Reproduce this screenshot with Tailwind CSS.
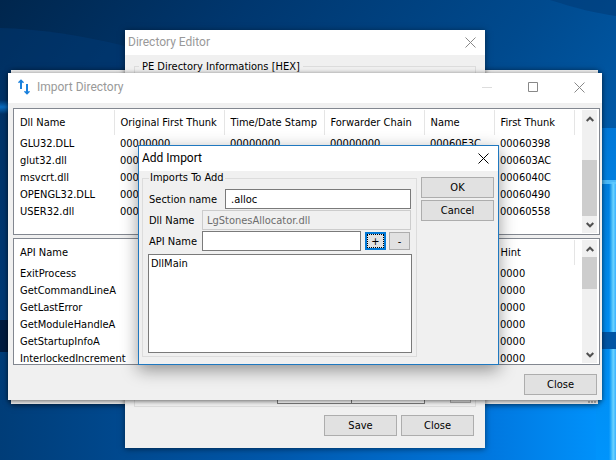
<!DOCTYPE html>
<html lang="en">
<head>
    <meta charset="UTF-8">
    <meta name="viewport" content="width=device-width, initial-scale=1.0">
    <title>Import Directory</title>
    <script src="https://cdn.jsdelivr.net/npm/@tailwindcss/browser@4"></script>
</head>
<body class="relative min-h-screen overflow-hidden bg-[#003a75] font-['DejaVu_Sans_Condensed','DejaVu_Sans',sans-serif] text-[11px] leading-[17px] text-black">
    <!-- Wallpaper -->
    <svg class="absolute inset-0 h-full w-full" viewBox="0 0 616 460" preserveAspectRatio="none" aria-hidden="true">
        <defs>
            <linearGradient id="base" x1="0" y1="0" x2="1" y2="0.6">
                <stop offset="0" stop-color="#00264d"/>
                <stop offset="0.3" stop-color="#00376f"/>
                <stop offset="0.65" stop-color="#004a8e"/>
                <stop offset="1" stop-color="#0064b8"/>
            </linearGradient>
            <linearGradient id="floor" x1="0" y1="0" x2="1" y2="0">
                <stop offset="0" stop-color="#003d78"/>
                <stop offset="0.45" stop-color="#0058ac"/>
                <stop offset="0.8" stop-color="#0078e0"/>
                <stop offset="1" stop-color="#0096ff"/>
            </linearGradient>
            <linearGradient id="side" x1="0" y1="0" x2="0" y2="1">
                <stop offset="0" stop-color="#0078d8"/>
                <stop offset="0.4" stop-color="#0088e8"/>
                <stop offset="1" stop-color="#0094fc"/>
            </linearGradient>
            <linearGradient id="glow" x1="0" y1="0" x2="1" y2="0">
                <stop offset="0" stop-color="#58c8ff" stop-opacity="0"/>
                <stop offset="0.6" stop-color="#6cd4ff"/>
                <stop offset="1" stop-color="#38b0ff"/>
            </linearGradient>
            <linearGradient id="streak" x1="0" y1="0" x2="0" y2="1">
                <stop offset="0" stop-color="#0a6cc0" stop-opacity="0"/>
                <stop offset="0.5" stop-color="#0a6cc0"/>
                <stop offset="1" stop-color="#0a6cc0" stop-opacity="0"/>
            </linearGradient>
        </defs>
        <rect width="616" height="460" fill="url(#base)"/>
        <path d="M0 28C40 29 80 35 125 46V400H0z" fill="#004080" opacity="0.35"/>
        <path d="M550 0C575 8 595 13 616 16V0z" fill="#003c78" opacity="0.6"/>
        <rect y="350" width="616" height="110" fill="url(#floor)"/>
        <rect x="596" y="128" width="20" height="332" fill="url(#side)"/>
        <rect y="100" width="10" height="14" fill="url(#streak)"/>
        <rect y="320" width="10" height="32" fill="#001c40"/>
        <rect x="602" y="332" width="14" height="17" fill="#0055a4"/>
        <path d="M609 182H616V332H609zM609 349H616V460H609z" fill="url(#glow)"/>
        <rect x="602" y="180" width="14" height="4" fill="#5cc8ff" opacity="0.8"/>
    </svg>

    <!-- Parent window -->
    <div class="absolute top-[70px] right-[18px] left-[11px] flex h-[334px] items-end justify-end bg-[#f0f0f0] pr-[2px] pb-px shadow-[0_1px_6px_rgba(0,0,0,0.6)]">
        <svg class="size-[8px]" viewBox="0 0 8 8" fill="#b0b0b0" aria-hidden="true"><path d="M0 6h2v2H0zM3 6h2v2H3zM6 6h2v2H6zM3 3h2v2H3zM6 3h2v2H6zM6 0h2v2H6z"/></svg>
    </div>

    <!-- Directory Editor -->
    <section class="absolute top-[30px] right-[131px] left-[125px] bg-[#f0f0f0] shadow-[0_1px_6px_rgba(0,0,0,0.5)]">
        <header class="flex h-[25px] items-center justify-between bg-white pr-[9px] pl-[3px] font-[Roboto,sans-serif] text-[12px] text-[#999]">
            <h2>Directory Editor</h2>
            <button type="button" aria-label="Close Directory Editor">
                <svg class="size-[11px]" viewBox="0 0 11 11" stroke="#888" fill="none"><path d="M.5.5l10 10M10.5.5l-10 10"/></svg>
            </button>
        </header>
        <div class="px-[9px] pt-[3px] pb-3">
            <fieldset class="h-[349px] border border-[#dcdcdc] px-1">
                <legend class="px-[3px]">PE Directory Informations [HEX]</legend>
                <div class="mt-[309px] flex items-end pl-[138px]">
                    <input type="text" aria-label="RVA" class="h-5 w-[75px] border border-[#7a7a7a] bg-white">
                    <input type="text" aria-label="Size" class="-ml-px h-5 w-[74px] border border-[#7a7a7a] bg-white">
                    <button type="button" aria-label="Browse" class="mb-[1px] ml-[25px] h-[18px] w-[21px] border border-[#adadad] bg-[#e1e1e1]"></button>
                </div>
            </fieldset>
            <div class="mt-2 flex justify-end gap-1 pr-[2px]">
                <button type="button" class="h-[21px] w-[73px] border border-[#adadad] bg-[#e1e1e1]">Save</button>
                <button type="button" class="h-[21px] w-[73px] border border-[#adadad] bg-[#e1e1e1]">Close</button>
            </div>
        </div>
    </section>

    <!-- Import Directory -->
    <section class="absolute top-[73px] right-[14px] left-2 bg-[#f0f0f0] shadow-[0_1px_5px_rgba(0,0,0,0.6)]">
        <header class="flex h-[30px] items-center bg-white pr-[17px] pb-[2px] pl-[10px] font-[Roboto,sans-serif] text-[12px] text-[#999]">
            <svg class="h-4 w-3" viewBox="0 0 12 16" fill="none" stroke="#1a80dc" aria-hidden="true">
                <path d="M3 10V1.500M9 5v9.500" stroke-width="2"/>
                <path d="M.5 3.700L3 1.200L5.500 3.700M6.500 12.300L9 14.800L11.500 12.300" stroke-width="1.500"/>
            </svg>
            <h2 class="ml-[7px] flex-1">Import Directory</h2>
            <div class="flex items-center gap-9">
                <button type="button" aria-label="Minimize" disabled><svg class="size-[10px]" viewBox="0 0 10 10" stroke="#ddd"><path d="M0 5.500h10"/></svg></button>
                <button type="button" aria-label="Maximize"><svg class="size-[10px]" viewBox="0 0 10 10" stroke="#888" fill="none"><path d="M.5.500h9v9h-9z"/></svg></button>
                <button type="button" aria-label="Close Import Directory"><svg class="size-[11px]" viewBox="0 0 11 11" stroke="#888" fill="none"><path d="M.5.5l10 10M10.500.5l-10 10"/></svg></button>
            </div>
        </header>

        <div class="flex flex-col gap-[3px] pt-[5px] pr-[2px] pb-[5px] pl-[5px]">
            <div class="flex h-[127px] overflow-hidden border border-[#828790] bg-white">
                <div class="flex-1 overflow-hidden pt-px">
                    <table class="w-[560px] table-fixed border-collapse text-left whitespace-nowrap">
                        <thead>
                            <tr class="h-[25px]">
                                <th class="w-[100px] border-r border-[#e5e5e5] pb-px pl-[6px] font-normal">Dll Name</th>
                                <th class="w-[110px] border-r border-[#e5e5e5] pb-px pl-[6px] font-normal">Original First Thunk</th>
                                <th class="w-[100px] border-r border-[#e5e5e5] pb-px pl-[6px] font-normal">Time/Date Stamp</th>
                                <th class="w-[100px] border-r border-[#e5e5e5] pb-px pl-[6px] font-normal">Forwarder Chain</th>
                                <th class="w-[70px] border-r border-[#e5e5e5] pb-px pl-[6px] font-normal">Name</th>
                                <th class="w-[80px] border-r border-[#e5e5e5] pb-px pl-[6px] font-normal">First Thunk</th>
                            </tr>
                        </thead>
                        <tbody>
                            <tr><td class="pl-[6px]">GLU32.DLL</td><td class="pl-[6px]">00000000</td><td class="pl-[6px]">00000000</td><td class="pl-[6px]">00000000</td><td class="pl-[6px]">00060E3C</td><td class="pl-[6px]">00060398</td></tr>
                            <tr><td class="pl-[6px]">glut32.dll</td><td class="pl-[6px]">00000000</td><td></td><td></td><td></td><td class="pl-[6px]">000603AC</td></tr>
                            <tr><td class="pl-[6px]">msvcrt.dll</td><td class="pl-[6px]">00000000</td><td></td><td></td><td></td><td class="pl-[6px]">0006040C</td></tr>
                            <tr><td class="pl-[6px]">OPENGL32.DLL</td><td class="pl-[6px]">00000000</td><td></td><td></td><td></td><td class="pl-[6px]">00060490</td></tr>
                            <tr><td class="pl-[6px]">USER32.dll</td><td class="pl-[6px]">00000000</td><td></td><td></td><td></td><td class="pl-[6px]">00060558</td></tr>
                        </tbody>
                    </table>
                </div>
                <!-- Scroll bar -->
                <div class="my-px mr-[2px] flex w-[15px] flex-col bg-[#f0f0f0]">
                    <div class="flex h-[17px] items-center justify-center"><svg class="h-[6px] w-2" viewBox="0 0 8 6" fill="none" stroke="#505050" stroke-width="2"><path d="M.7 5L4 1.700L7.300 5"/></svg></div>
                    <div class="mt-[33px] h-14 bg-[#cdcdcd]"></div>
                    <div class="flex flex-1 items-center justify-center"><svg class="h-[6px] w-2" viewBox="0 0 8 6" fill="none" stroke="#505050" stroke-width="2"><path d="M.7 1L4 4.300L7.300 1"/></svg></div>
                </div>
            </div>

            <div class="flex h-[127px] overflow-hidden border border-[#828790] bg-white">
                <div class="flex-1 overflow-hidden pt-px">
                    <table class="w-[560px] table-fixed border-collapse text-left whitespace-nowrap">
                        <thead>
                            <tr class="h-[25px]">
                                <th class="w-[480px] border-r border-[#e5e5e5] pb-px pl-[6px] font-normal">API Name</th>
                                <th class="w-[80px] border-r border-[#e5e5e5] pb-px pl-[6px] font-normal">Hint</th>
                            </tr>
                        </thead>
                        <tbody>
                            <tr><td class="pl-[6px]">ExitProcess</td><td class="pl-[6px]">0000</td></tr>
                            <tr><td class="pl-[6px]">GetCommandLineA</td><td class="pl-[6px]">0000</td></tr>
                            <tr><td class="pl-[6px]">GetLastError</td><td class="pl-[6px]">0000</td></tr>
                            <tr><td class="pl-[6px]">GetModuleHandleA</td><td class="pl-[6px]">0000</td></tr>
                            <tr><td class="pl-[6px]">GetStartupInfoA</td><td class="pl-[6px]">0000</td></tr>
                            <tr><td class="pl-[6px]">InterlockedIncrement</td><td class="pl-[6px]">0000</td></tr>
                        </tbody>
                    </table>
                </div>
                <!-- Scroll bar -->
                <div class="my-px mr-[2px] flex w-[15px] flex-col bg-[#f0f0f0]">
                    <div class="flex h-[17px] items-center justify-center"><svg class="h-[6px] w-2" viewBox="0 0 8 6" fill="none" stroke="#505050" stroke-width="2"><path d="M.7 5L4 1.700L7.300 5"/></svg></div>
                    <div class="h-8 bg-[#cdcdcd]"></div>
                    <div class="flex-1"></div>
                    <div class="flex h-[17px] items-center justify-center"><svg class="h-[6px] w-2" viewBox="0 0 8 6" fill="none" stroke="#505050" stroke-width="2"><path d="M.7 1L4 4.300L7.300 1"/></svg></div>
                </div>
            </div>

            <div class="flex justify-end pt-[6px] pr-[3px]">
                <button type="button" class="h-[21px] w-[73px] border border-[#adadad] bg-[#e1e1e1]">Close</button>
            </div>
        </div>
    </section>

    <!-- Add Import -->
    <form class="absolute top-[145px] right-[117px] left-[138px] border border-[#1f78c0] bg-[#f0f0f0] shadow-[0_5px_16px_rgba(0,0,0,0.4)]">
        <header class="flex h-[25px] items-center justify-between bg-white pr-[9px] pl-[3px] font-[Roboto,sans-serif] text-[12px]">
            <h2>Add Import</h2>
            <button type="button" aria-label="Close Add Import">
                <svg class="size-[11px]" viewBox="0 0 11 11" stroke="#000" fill="none"><path d="M.5.5l10 10M10.500.5l-10 10"/></svg>
            </button>
        </header>
        <div class="flex gap-1 pb-[7px] pl-[3px] pr-1">
            <fieldset class="min-w-0 flex-1 border border-[#dcdcdc] pr-[5px] pb-[3px] pl-[6px]">
                <legend class="px-px leading-[14px]">Imports To Add</legend>
                <div class="flex flex-col gap-px pt-1">
                    <div class="flex items-center">
                        <label for="section" class="w-[76px]">Section name</label>
                        <input id="section" type="text" value=".alloc" class="h-5 min-w-0 flex-1 border border-[#7a7a7a] bg-white px-[5px]">
                    </div>
                    <div class="flex items-center">
                        <label for="dll" class="w-[53px]">Dll Name</label>
                        <input id="dll" type="text" value="LgStonesAllocator.dll" disabled class="h-5 min-w-0 flex-1 border border-[#ccc] bg-[#f0f0f0] px-1 text-[#6d6d6d]">
                    </div>
                    <div class="flex items-center pr-px">
                        <label for="api" class="w-[53px]">API Name</label>
                        <input id="api" type="text" class="h-5 min-w-0 flex-1 border border-[#7a7a7a] bg-white px-1">
                        <button type="button" class="ml-1 flex h-[18px] w-[21px] items-center justify-center border-2 border-[#0078d7] bg-[#e1e1e1] outline-1 -outline-offset-3 outline-dotted outline-black">+</button>
                        <button type="button" class="ml-[3px] flex h-[18px] w-[21px] items-center justify-center border border-[#adadad] bg-[#e1e1e1]">-</button>
                    </div>
                </div>
                <ul class="-mx-px mt-[3px] h-[99px] border border-[#7a7a7a] bg-white px-[2px]">
                    <li>DllMain</li>
                </ul>
            </fieldset>
            <div class="flex w-[73px] flex-col gap-[2px] pt-[6px]">
                <button type="submit" class="h-[21px] border border-[#adadad] bg-[#e1e1e1]">OK</button>
                <button type="button" class="h-[21px] border border-[#adadad] bg-[#e1e1e1]">Cancel</button>
            </div>
        </div>
    </form>
</body>
</html>
